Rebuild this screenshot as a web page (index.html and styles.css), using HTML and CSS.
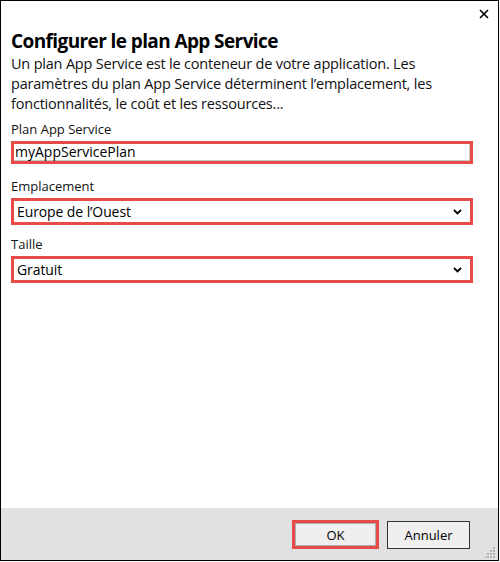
FILE: index.html
```html
<!DOCTYPE html>
<html lang="fr">
<head>
<meta charset="utf-8">
<title>Configurer le plan App Service</title>
<link rel="stylesheet" href="styles.css">
</head>
<body>
<div class="frame">
  <div class="content">
    <div class="topbar">
      <svg class="close" width="10" height="10" viewBox="0 0 10 10" aria-label="Fermer"><path d="M1 1L9 9M9 1L1 9" stroke="#000" stroke-width="1.6" fill="none"/></svg>
    </div>
    <h1 class="title">Configurer le plan App Service</h1>
    <p class="desc">Un plan App Service est le conteneur de votre application. Les paramètres du plan App Service déterminent l’emplacement, les fonctionnalités, le coût et les ressources...</p>

    <div class="label label-first">Plan App Service</div>
    <div class="hl hl-input"><div class="input">myAppServicePlan</div></div>

    <div class="label label-after-input">Emplacement</div>
    <div class="hl hl-select"><div class="select"><span>Europe de l’Ouest</span>
      <svg class="chev" width="9" height="6" viewBox="0 0 9 6"><path d="M1 1L4.5 4.5L8 1" stroke="#000" stroke-width="1.8" fill="none"/></svg></div></div>

    <div class="label">Taille</div>
    <div class="hl hl-select"><div class="select"><span>Gratuit</span>
      <svg class="chev" width="9" height="6" viewBox="0 0 9 6"><path d="M1 1L4.5 4.5L8 1" stroke="#000" stroke-width="1.8" fill="none"/></svg></div></div>
  </div>
  <div class="footer">
    <div class="hl hl-btn"><button class="btn btn-ok">OK</button></div>
    <button class="btn btn-cancel">Annuler</button>
    <svg class="grip" width="11" height="11" viewBox="0 0 11 11">
      <g fill="#b4b4b4">
        <rect x="8" y="0" width="2" height="2"/>
        <rect x="5" y="3" width="2" height="2"/><rect x="8" y="3" width="2" height="2"/>
        <rect x="2" y="6" width="2" height="2"/><rect x="5" y="6" width="2" height="2"/><rect x="8" y="6" width="2" height="2"/>
        <rect x="-1" y="9" width="2" height="2"/><rect x="2" y="9" width="2" height="2"/><rect x="5" y="9" width="2" height="2"/><rect x="8" y="9" width="2" height="2"/>
      </g>
    </svg>
  </div>
</div>
</body>
</html>
```
FILE: styles.css
```css
html, body {
  margin: 0;
  padding: 0;
  background: #fff;
}
.frame {
  width: 499px;
  height: 561px;
  box-sizing: border-box;
  border: 1px solid #000;
  display: flex;
  flex-direction: column;
  font-family: "Open Sans", "Noto Sans", sans-serif;
  color: #000;
}
.content {
  flex: 1;
  padding: 0 25px 0 10px;
  position: relative;
}
.topbar {
  height: 27px;
  display: flex;
  justify-content: flex-end;
  align-items: flex-start;
}
.close {
  margin-top: 8px;
  margin-right: -16px;
}
.title {
  margin: 0;
  font-size: 19px;
  font-weight: 700;
  line-height: 26px;
  letter-spacing: -0.6px;
}
.desc {
  margin: 0;
  font-size: 14.5px;
  line-height: 20px;
  letter-spacing: -0.2px;
  color: #111;
}
.label {
  font-size: 13px;
  line-height: 16px;
  margin-top: 11px;
  margin-bottom: 4px;
  color: #111;
}
.label-first {
  margin-top: 7px;
}
.label-after-input {
  margin-top: 14px;
}
.hl {
  border: 3px solid #e84b47;
}
.input {
  height: 17px;
  border-right: 1px solid #c8c8c8;
  border-bottom: 1px solid #c8c8c8;
  box-sizing: border-box;
  font-size: 14px;
  line-height: 16px;
  padding-left: 1px;
}
.select {
  height: 21px;
  display: flex;
  align-items: center;
  justify-content: space-between;
  padding: 0 8px 0 3px;
  font-size: 14px;
  letter-spacing: -0.1px;
}
.chev {
  margin-top: 1px;
}
.footer {
  height: 52px;
  background: #e1e1e1;
  display: flex;
  align-items: center;
  justify-content: flex-end;
  padding-right: 28px;
  gap: 8px;
  position: relative;
}
.btn {
  font-family: "Open Sans", "Noto Sans", sans-serif;
  font-size: 13px;
  color: #000;
  background: #efefef;
  margin: 0;
  padding: 0;
}
.hl-btn {
  margin-top: 1px;
}
.btn-ok {
  width: 81px;
  height: 23px;
  border: 1px solid #adadad;
  display: block;
}
.btn-cancel {
  width: 83px;
  height: 28px;
  border: 1px solid #333;
  margin-top: 2px;
}
.grip {
  position: absolute;
  right: 2px;
  bottom: 2px;
}
```
